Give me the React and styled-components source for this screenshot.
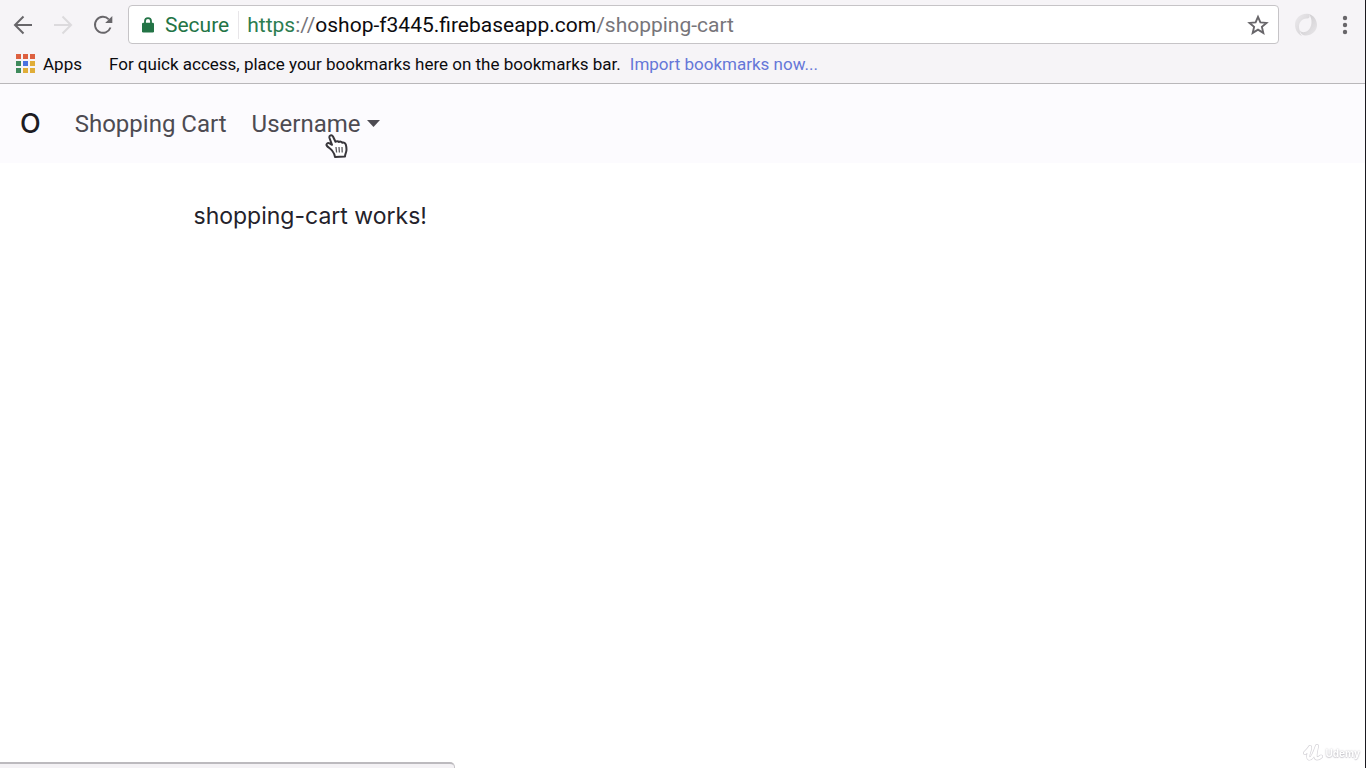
import React from "react";
import styled, { createGlobalStyle } from "styled-components";

const GlobalStyle = createGlobalStyle`
  *, *::before, *::after { box-sizing: border-box; }
  body {
    margin: 0;
    background: #ffffff;
    color: #24222b;
    font-family: Roboto, "Liberation Sans", sans-serif;
  }
  button { font: inherit; color: inherit; }
`;

const Window = styled.div`
  display: flex;
  flex-direction: column;
  min-height: 100vh;
  border-right: 1px solid #1b1a20;
  overflow: hidden;
`;

const BrowserChrome = styled.header`
  background: #f6f4f7;
  border-bottom: 1px solid #b9b7ba;
`;

const Toolbar = styled.div`
  display: flex;
  align-items: center;
  height: 44px;
  padding: 5px 7px 0 10px;
`;

const IconButton = styled.button`
  display: flex;
  flex: none;
  align-items: center;
  justify-content: center;
  width: 26px;
  height: 26px;
  padding: 0;
  border: 0;
  background: none;
  color: ${({ $muted }) => ($muted ? "#dcdadd" : "#68666a")};
`;

const History = styled.div`
  display: flex;
  gap: 14px;
  margin-right: 12px;
`;

const AddressBar = styled.div`
  display: flex;
  flex: 1;
  align-items: center;
  min-width: 0;
  height: 39px;
  padding: 0 7px 0 13px;
  background: #ffffff;
  border: 1px solid #c6c4c7;
  border-radius: 4px;
  font-size: 21px;
`;

const Security = styled.span`
  display: flex;
  align-items: center;
  gap: 11px;
  height: 28px;
  padding-right: 9px;
  margin-right: 8px;
  border-right: 1px solid #e8e6e9;
  color: #237446;
`;

const Url = styled.div`
  flex: 1;
  min-width: 0;
  overflow: hidden;
  white-space: nowrap;
  color: #77757a;
  outline: none;
`;

const Scheme = styled.span`
  color: #2c7d50;
`;

const Host = styled.span`
  color: #0c0b0e;
`;

const Actions = styled.div`
  display: flex;
  align-items: center;
  gap: 13px;
  margin-left: 14px;
`;

const BookmarksBar = styled.nav`
  display: flex;
  align-items: center;
  height: 39px;
  padding: 0 16px;
  font-size: 17px;
  color: #0c0b0e;
`;

const AppsButton = styled.button`
  display: flex;
  align-items: center;
  gap: 8px;
  margin-right: 27px;
  padding: 0;
  border: 0;
  background: none;
`;

const Hint = styled.span`
  margin-right: 9px;
`;

const ImportLink = styled.a`
  color: #6577d8;
  text-decoration: none;
`;

const Navbar = styled.nav`
  display: flex;
  align-items: center;
  height: 79px;
  padding: 0 20px;
  background: #fcfbfe;
  font-size: 24px;
  color: #4d4b52;
`;

const Brand = styled.a`
  margin-right: 34px;
  color: #1d1b22;
  font-family: Inter, sans-serif;
  font-size: 27px;
  font-weight: 500;
  text-decoration: none;
`;

const NavLink = styled.a`
  margin-right: 25px;
  color: inherit;
  text-decoration: none;
`;

const Dropdown = styled.div`
  position: relative;
`;

const DropdownToggle = styled.button`
  display: flex;
  align-items: center;
  gap: 7px;
  padding: 0;
  border: 0;
  background: none;
`;

const Pointer = styled.svg`
  position: absolute;
  top: 23px;
  left: 73px;
`;

const Container = styled.main`
  flex: 1;
  width: 100%;
  max-width: 978px;
  margin: 0 auto;
  padding-top: 36px;
  font-family: Inter, sans-serif;
  font-size: 23px;
  line-height: 34px;
`;

const Message = styled.p`
  margin: 0;
`;

const StatusBubble = styled.div`
  position: fixed;
  bottom: 0;
  left: 0;
  width: 455px;
  height: 6px;
  background: #f4f2f5;
  border-top: 2px solid #bcbabe;
  border-right: 1px solid #c6c4c8;
  border-top-right-radius: 5px;
`;

const Watermark = styled.div`
  position: fixed;
  right: 6px;
  bottom: 5px;
  display: flex;
  align-items: center;
  gap: 2px;
  color: #ffffff;
  font-family: Inter, sans-serif;
  font-size: 10px;
  font-weight: 700;
  line-height: 20px;
  text-shadow: 0 0 2px #b4b2b8, 0 1px 1px #dad8dd;
`;

const APP_COLORS = [
  "#dd6040", "#dd6040", "#dd6040",
  "#3f8a5c", "#4a72e0", "#e0ad38",
  "#3f8a5c", "#e0ad38", "#e0ad38",
];

function BackIcon() {
  return (
    <svg width="20" height="20" viewBox="0 0 20 20" fill="none" stroke="currentColor" strokeWidth="2">
      <path d="M19 10H2.500M10.500 1.500L2 10l8.500 8.500" />
    </svg>
  );
}

function ForwardIcon() {
  return (
    <svg width="20" height="20" viewBox="0 0 20 20" fill="none" stroke="currentColor" strokeWidth="2">
      <path d="M1 10h16.500M9.500 1.500L18 10l-8.500 8.500" />
    </svg>
  );
}

function ReloadIcon() {
  return (
    <svg width="22" height="22" viewBox="0 0 22 22">
      <path d="M16.800 5.300A8 8 0 1 0 18.500 13.500" fill="none" stroke="currentColor" strokeWidth="1.900" />
      <path d="M20.300 2V9H13.200Z" fill="currentColor" />
    </svg>
  );
}

function LockIcon() {
  return (
    <svg width="12" height="16" viewBox="0 0 12 16">
      <path d="M3 7V4.200a3 3 0 0 1 6 0V7" fill="none" stroke="currentColor" strokeWidth="1.800" />
      <rect y="5.800" width="12" height="9.800" rx="1.300" fill="currentColor" />
    </svg>
  );
}

function StarIcon() {
  return (
    <svg width="22" height="22" viewBox="0 0 22 22">
      <path
        d="M11 2.800l2.400 5.600 6.100.5-4.600 4 1.400 6-5.300-3.200-5.300 3.200 1.400-6-4.600-4 6.100-.5z"
        fill="none"
        stroke="currentColor"
        strokeWidth="1.900"
      />
    </svg>
  );
}

function ExtensionIcon() {
  return (
    <svg width="24" height="24" viewBox="0 0 24 24">
      <defs>
        <linearGradient id="leftArc" x1="0" x2="1" y1="0" y2="1">
          <stop offset="0" stopColor="#edebee" />
          <stop offset="1" stopColor="#cfcdd0" />
        </linearGradient>
        <linearGradient id="rightArc" x1="0" x2="1" y1="0" y2="1">
          <stop offset="0" stopColor="#c6c4c7" />
          <stop offset="1" stopColor="#eae8eb" />
        </linearGradient>
      </defs>
      <path d="M15 1C7-.5 1 5 1 12c0 5 3 9 7 11-2-2-2.500-4-2-5C3 12 7 5 13 5.500c3 .3 3-3 2-4.500z" fill="url(#leftArc)" />
      <path d="M15 1c5 1.500 8 6 8 11 0 6.500-6 11-12 10.500-3-.3-5-2.500-5-5 1.500 2.500 5.500 2 8 0 4-3.500 5-11 1-16.500z" fill="url(#rightArc)" />
      <ellipse cx="12" cy="12" rx="4.200" ry="5.800" transform="rotate(12 12 12)" fill="#f6f4f7" />
    </svg>
  );
}

function MenuIcon() {
  return (
    <svg width="6" height="20" viewBox="0 0 6 20" fill="currentColor">
      <circle cx="3" cy="3" r="2.200" />
      <circle cx="3" cy="10" r="2.200" />
      <circle cx="3" cy="17" r="2.200" />
    </svg>
  );
}

function AppsIcon() {
  return (
    <svg width="19" height="19" viewBox="0 0 19 19">
      {APP_COLORS.map((color, i) => (
        <rect key={i} x={(i % 3) * 7} y={Math.floor(i / 3) * 7} width="5" height="5" fill={color} />
      ))}
    </svg>
  );
}

function HandPointer() {
  return (
    <Pointer width="24" height="26" viewBox="0 0 24 26" aria-hidden="true">
      <path
        d="M7.400 18C6 15.800 3.500 14.800 2 13c-1.400-1.800.6-3.600 2.600-2.600l2.400 1.400L4.500 5C3.800 2.400 6.700 1.200 8 3.500l2.500 5.300c.9-.9 2.600-.9 3.500.2 1-.7 2.600-.4 3.300.8 1.600-.6 3 .3 3.500 1.800.7 2.600 1 4.600.4 7-.4 1.800-1.200 3-1.200 4.900l-10 .5c-.2-2.300-1.200-4.200-2.600-6z"
        fill="#ffffff"
        stroke="#38363b"
        strokeWidth="2"
        strokeLinejoin="round"
      />
      <path d="M11 14l.6 5.500M14 14l.4 5.500M17 14l.2 5.500" stroke="#5b595e" strokeWidth="1.300" />
    </Pointer>
  );
}

const UDEMY_STROKE = "M2 9c2-2 4-4 5-6C8 5 3 13 6 14.500 9 15.500 12 8 14 2c-1 5-3 12 0 12.500 2 0 3-1 4-2";

function UdemyMark() {
  return (
    <svg width="20" height="18" viewBox="0 0 20 18" fill="none" strokeLinecap="round" strokeLinejoin="round">
      <path d={UDEMY_STROKE} stroke="#d6d4d9" strokeWidth="4" />
      <path d={UDEMY_STROKE} stroke="#ffffff" strokeWidth="2.600" />
    </svg>
  );
}

export default function App() {
  return (
    <Window>
      <GlobalStyle />
      <BrowserChrome>
        <Toolbar>
          <History>
            <IconButton aria-label="Back"><BackIcon /></IconButton>
            <IconButton aria-label="Forward" $muted><ForwardIcon /></IconButton>
            <IconButton aria-label="Reload"><ReloadIcon /></IconButton>
          </History>
          <AddressBar>
            <Security><LockIcon />Secure</Security>
            <Url role="textbox" aria-label="Address" contentEditable suppressContentEditableWarning spellCheck={false}>
              <Scheme>https</Scheme>://<Host>oshop-f3445.firebaseapp.com</Host>/shopping-cart
            </Url>
            <IconButton aria-label="Bookmark this page"><StarIcon /></IconButton>
          </AddressBar>
          <Actions>
            <IconButton aria-label="Extension"><ExtensionIcon /></IconButton>
            <IconButton aria-label="Menu"><MenuIcon /></IconButton>
          </Actions>
        </Toolbar>
        <BookmarksBar aria-label="Bookmarks">
          <AppsButton><AppsIcon />Apps</AppsButton>
          <Hint>For quick access, place your bookmarks here on the bookmarks bar.</Hint>
          <ImportLink href="#import">Import bookmarks now...</ImportLink>
        </BookmarksBar>
      </BrowserChrome>
      <Navbar>
        <Brand href="#home">O</Brand>
        <NavLink href="#shopping-cart">Shopping Cart</NavLink>
        <Dropdown>
          <DropdownToggle aria-haspopup="menu">
            Username
            <svg width="13" height="8" viewBox="0 0 13 8"><path d="M0 0h13L6.500 7z" fill="currentColor" /></svg>
          </DropdownToggle>
          <HandPointer />
        </Dropdown>
      </Navbar>
      <Container>
        <Message>shopping-cart works!</Message>
      </Container>
      <StatusBubble />
      <Watermark><UdemyMark />Udemy</Watermark>
    </Window>
  );
}
